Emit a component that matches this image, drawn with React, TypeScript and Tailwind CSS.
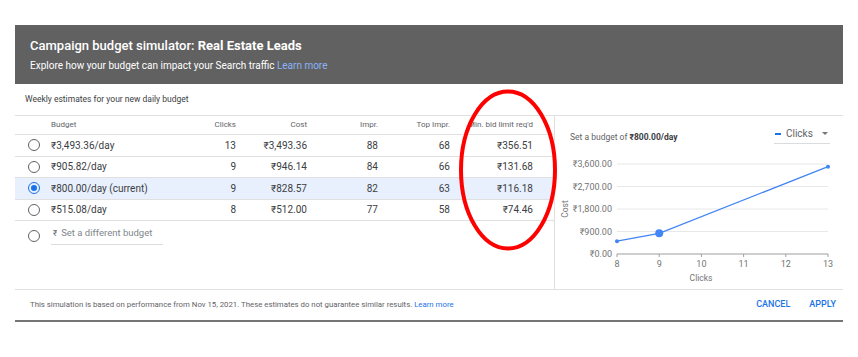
const rows = [
  { budget: "₹3,493.36/day", clicks: "13", cost: "₹3,493.36", impr: "88", top: "68", bid: "₹356.51" },
  { budget: "₹905.82/day", clicks: "9", cost: "₹946.14", impr: "84", top: "66", bid: "₹131.68" },
  { budget: "₹800.00/day (current)", clicks: "9", cost: "₹828.57", impr: "82", top: "63", bid: "₹116.18", selected: true },
  { budget: "₹515.08/day", clicks: "8", cost: "₹512.00", impr: "77", top: "58", bid: "₹74.46" },
];

const yTicks = [
  { label: "₹3,600.00", y: 14 },
  { label: "₹2,700.00", y: 36.5 },
  { label: "₹1,800.00", y: 59 },
  { label: "₹900.00", y: 81.5 },
  { label: "₹0.00", y: 104 },
];

const xTicks = [8, 9, 10, 11, 12, 13];

function Radio({ checked }: { checked?: boolean }) {
  return checked ? (
    <span className="flex h-[12px] w-[12px] items-center justify-center rounded-full border-[1.5px] border-[#1a73e8]">
      <span className="h-[6px] w-[6px] rounded-full bg-[#1a73e8]" />
    </span>
  ) : (
    <span className="h-[12px] w-[12px] rounded-full border-[1.5px] border-[#5f6368]" />
  );
}

function CostChart() {
  const x = (c: number) => 62 + (c - 8) * 42.2;
  const y = (v: number) => 104 - v * 0.025;
  const pts = [
    [x(8), y(512)],
    [x(9), y(828.57)],
    [x(13), y(3493.36)],
  ];
  return (
    <svg width="288" height="139" className="block">
      {yTicks.map((t) => (
        <g key={t.label}>
          <line x1="62" x2="273" y1={t.y} y2={t.y} stroke={t.y === 104 ? "#9e9e9e" : "#e8e8e8"} strokeWidth="1" />
          <text x="57" y={t.y + 3.2} textAnchor="end" fontSize="9" fill="#757575">
            {t.label}
          </text>
        </g>
      ))}
      {xTicks.map((c) => (
        <g key={c}>
          <line x1={x(c)} x2={x(c)} y1="104" y2="107" stroke="#9e9e9e" />
          <text x={x(c)} y="116.5" textAnchor="middle" fontSize="9" fill="#757575">
            {c}
          </text>
        </g>
      ))}
      <text x="146" y="131" textAnchor="middle" fontSize="8.5" fill="#757575">
        Clicks
      </text>
      <text x="13" y="59" textAnchor="middle" fontSize="8.5" fill="#757575" transform="rotate(-90 13 59)">
        Cost
      </text>
      <polyline points={pts.map((p) => p.join(",")).join(" ")} fill="none" stroke="#4285f4" strokeWidth="1.3" />
      <circle cx={pts[0][0]} cy={pts[0][1]} r="2" fill="#4285f4" />
      <circle cx={pts[1][0]} cy={pts[1][1]} r="4" fill="#4285f4" />
      <circle cx={pts[2][0]} cy={pts[2][1]} r="2" fill="#4285f4" />
    </svg>
  );
}

export default function App() {
  return (
    <div className="relative h-[357px] w-[858px] bg-white font-['Roboto',sans-serif]">
      <div className="px-[15px] pt-[25px]">
        <div className="h-[59px] bg-[#616161] px-[15px] pt-[12px] text-white">
          <h1 className="text-[13px] leading-[18px]">
            <span className="font-medium">Campaign budget simulator: </span>
            <span className="font-bold">Real Estate Leads</span>
          </h1>
          <p className="mt-[4px] text-[10px] leading-[13px] text-white">
            Explore how your budget can impact your Search traffic <span className="text-[#8ab4f8]">Learn more</span>
          </p>
        </div>

        <div className="flex h-[32px] items-center border-b border-[#e0e0e0] px-[10px] text-[8.5px] text-[#3c4043]">
          Weekly estimates for your new daily budget
        </div>

        <div className="flex h-[173px]">
          <div className="w-[540px] border-r border-[#e0e0e0]">
            <div className="flex h-[19px] items-center border-b border-[#e0e0e0] text-[8px] text-[#5f6368]">
              <span className="w-[36px]" />
              <span className="w-[135px]">Budget</span>
              <span className="w-[50px] text-right">Clicks</span>
              <span className="w-[71px] text-right">Cost</span>
              <span className="w-[71px] text-right">Impr.</span>
              <span className="w-[72px] text-right">Top Impr.</span>
              <span className="w-[83px] text-right">Min. bid limit req'd</span>
            </div>
            {rows.map((r) => (
              <div
                key={r.budget}
                className={`flex h-[21.5px] items-center border-b border-[#e0e0e0] text-[10px] text-[#3c4043] ${
                  r.selected ? "bg-[#e8f0fe]" : ""
                }`}
              >
                <span className="flex w-[36px] justify-center pl-[1px]">
                  <Radio checked={r.selected} />
                </span>
                <span className="w-[135px]">{r.budget}</span>
                <span className="w-[50px] text-right">{r.clicks}</span>
                <span className="w-[71px] text-right">{r.cost}</span>
                <span className="w-[71px] text-right">{r.impr}</span>
                <span className="w-[72px] text-right">{r.top}</span>
                <span className="w-[83px] text-right">{r.bid}</span>
              </div>
            ))}
            <div className="flex h-[26px] items-center">
              <span className="flex w-[36px] justify-center pl-[1px] pt-[4px]">
                <Radio />
              </span>
              <div className="flex h-[22px] w-[112px] items-center border-b border-[#dadce0] pl-[2px] text-[9.5px] text-[#80868b]">
                <span className="mr-[4px] text-[8px] text-[#5f6368]">₹</span>
                Set a different budget
              </div>
            </div>
          </div>

          <div className="flex-1">
            <div className="flex h-[34px] items-start justify-between pl-[15px] pr-[13px] pt-[15px]">
              <span className="text-[8.5px] text-[#5f6368]">
                Set a budget of <span className="font-bold text-[#3c4043]">₹800.00/day</span>
              </span>
              <div className="-mt-[7px] flex h-[20px] w-[56px] items-center border-b border-[#dadce0] pl-[1px] text-[10px] text-[#5f6368]">
                <span className="mr-[5px] h-[2px] w-[6px] bg-[#1a73e8]" />
                Clicks
                <span className="ml-auto mr-[2px] h-0 w-0 border-x-[3.5px] border-t-[3.5px] border-x-transparent border-t-[#757575]" />
              </div>
            </div>
            <CostChart />
          </div>
        </div>

        <div className="flex h-[33px] items-center justify-between border-y border-[#e0e0e0] border-b-2 border-b-[#757575] pl-[15px] pr-[7px]">
          <span className="text-[7.8px] text-[#5f6368]">
            This simulation is based on performance from Nov 15, 2021. These estimates do not guarantee similar results.{" "}
            <span className="text-[#1a73e8]">Learn more</span>
          </span>
          <div className="flex gap-[19px] text-[9px] font-medium text-[#1a73e8]">
            <span>CANCEL</span>
            <span>APPLY</span>
          </div>
        </div>
      </div>

      <svg className="absolute left-[456px] top-[87px]" width="104" height="166">
        <ellipse cx="52" cy="83" rx="47" ry="78.5" fill="none" stroke="#ff0000" strokeWidth="4" />
      </svg>
    </div>
  );
}
